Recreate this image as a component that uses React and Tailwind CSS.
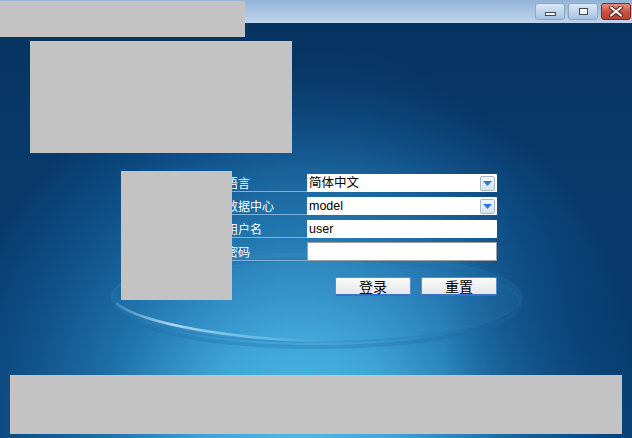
import React from "react";

const cjk = "font-['Noto_Sans_CJK_SC','Noto_Sans',sans-serif]";

function Background() {
  return (
    <svg className="absolute inset-0" width="632" height="415" viewBox="0 0 632 415">
      <defs>
        <radialGradient id="bg" cx="300" cy="400" r="360" gradientUnits="userSpaceOnUse">
          <stop offset="0" stopColor="#4cbbe8" />
          <stop offset="0.25" stopColor="#3fa6da" />
          <stop offset="0.55" stopColor="#1d6fa8" />
          <stop offset="0.8" stopColor="#0f4e86" />
          <stop offset="1" stopColor="#083a6a" />
        </radialGradient>
        <radialGradient id="dark" cx="600" cy="300" r="160" gradientUnits="userSpaceOnUse">
          <stop offset="0" stopColor="#07386a" stopOpacity="0.55" />
          <stop offset="1" stopColor="#07386a" stopOpacity="0" />
        </radialGradient>
        <radialGradient id="glow" cx="320" cy="220" r="200" gradientUnits="userSpaceOnUse">
          <stop offset="0" stopColor="#3a90c8" stopOpacity="0.2" />
          <stop offset="1" stopColor="#3a90c8" stopOpacity="0" />
        </radialGradient>
        <linearGradient id="arc" x1="110" y1="0" x2="360" y2="0" gradientUnits="userSpaceOnUse">
          <stop offset="0" stopColor="#bfe6fa" stopOpacity="0.15" />
          <stop offset="0.25" stopColor="#d8f2ff" stopOpacity="0.75" />
          <stop offset="0.6" stopColor="#a8dcf6" stopOpacity="0.4" />
          <stop offset="1" stopColor="#6ab4e0" stopOpacity="0" />
        </linearGradient>
        <linearGradient id="ring" x1="110" y1="0" x2="525" y2="0" gradientUnits="userSpaceOnUse">
          <stop offset="0" stopColor="#2a78b0" stopOpacity="0.5" />
          <stop offset="0.6" stopColor="#2a78b0" stopOpacity="0.35" />
          <stop offset="1" stopColor="#2a78b0" stopOpacity="0.15" />
        </linearGradient>
        <linearGradient id="top" x1="0" y1="0" x2="0" y2="415" gradientUnits="userSpaceOnUse">
          <stop offset="0" stopColor="#052f5a" stopOpacity="0.6" />
          <stop offset="0.35" stopColor="#052f5a" stopOpacity="0" />
        </linearGradient>
      </defs>
      <rect width="632" height="415" fill="url(#bg)" />
      <rect width="632" height="415" fill="url(#glow)" />
      <rect width="632" height="415" fill="url(#dark)" />
      <rect width="632" height="415" fill="url(#top)" />
      <ellipse cx="317" cy="274" rx="205" ry="45" fill="#5ab4e4" fillOpacity="0.08" stroke="url(#ring)" strokeWidth="2" />
      <ellipse cx="317" cy="280" rx="203" ry="44" fill="none" stroke="#1f6aa3" strokeOpacity="0.3" strokeWidth="4" />
      <path d="M116 280 C 140 300, 230 318, 360 320" fill="none" stroke="url(#arc)" strokeWidth="2.5" />
    </svg>
  );
}

function WinBtn({ children, red }) {
  return (
    <div
      className={
        "w-[30px] h-[17px] rounded-[3px] border flex items-center justify-center " +
        (red
          ? "border-[#7a2a20] bg-gradient-to-b from-[#e8907e] via-[#cc5340] to-[#b8402e]"
          : "border-[#8aa6c8] bg-gradient-to-b from-[#dbe7f4] via-[#c2d5eb] to-[#a9c2df]")
      }
    >
      {children}
    </div>
  );
}

function Dropdown({ value }) {
  return (
    <div className="w-[190px] h-[18px] bg-white flex items-center justify-between pl-[2px] pr-[2px]">
      <span className="text-[12.5px] leading-none text-black font-['Liberation_Sans','Noto_Sans_CJK_SC',sans-serif]">{value}</span>
      <div className="w-[15px] h-[15px] border border-[#a9b8c8] rounded-[2px] bg-gradient-to-b from-[#f4f7fa] to-[#d6e2ee] flex items-center justify-center">
        <svg width="9" height="5" viewBox="0 0 9 5">
          <path d="M0 0 H9 L4.5 5 Z" fill="#2f79dc" />
        </svg>
      </div>
    </div>
  );
}

function Row({ label, children }) {
  return (
    <div className="flex items-end h-[18px]">
      <div className={"w-[85px] h-[19px] border-b border-[#7eb2dc] flex items-end pl-[4px] text-white text-[12px] leading-[14px] pb-[1px] " + cjk}>
        {label}
      </div>
      {children}
    </div>
  );
}

function Btn({ children }) {
  return (
    <button className={"w-[76px] h-[19px] border border-[#5b8bd0] border-b-2 border-b-[#3f6fc0] rounded-[2px] bg-gradient-to-b from-[#fafafa] to-[#e6e6e6] text-black text-[14px] leading-none flex items-center justify-center " + cjk}>
      {children}
    </button>
  );
}

export default function App() {
  return (
    <div className="relative w-[632px] h-[438px] overflow-hidden flex flex-col bg-[#0a3c6c]">
      <div className="h-[23px] bg-gradient-to-b from-[#93b3d6] to-[#bfd5ec] flex justify-end items-start pt-[3px] pr-[1px] gap-[3px]">
        <WinBtn>
          <div className="w-[11px] h-[4px] bg-white border border-[#3a4a60] mt-[5px]" />
        </WinBtn>
        <WinBtn>
          <div className="w-[9px] h-[7px] border-[1.5px] border-[#3a4a60] bg-white" />
        </WinBtn>
        <WinBtn red>
          <svg width="14" height="11" viewBox="0 0 14 11">
            <path d="M2 1.5 L12 9.5 M12 1.5 L2 9.5" stroke="#4a1810" strokeWidth="4" strokeLinecap="round" />
            <path d="M2 1.5 L12 9.5 M12 1.5 L2 9.5" stroke="#ffffff" strokeWidth="2.2" strokeLinecap="round" />
          </svg>
        </WinBtn>
      </div>

      <div className="relative flex-1">
        <Background />
        <div className="relative flex flex-col w-[275px] ml-[222px] mt-[151px]">
          <div className="flex flex-col gap-[5px]">
            <Row label="语言">
              <Dropdown value="简体中文" />
            </Row>
            <Row label="数据中心">
              <Dropdown value="model" />
            </Row>
            <Row label="用户名">
              <div className="w-[190px] h-[18px] bg-white flex items-center pl-[2px]">
                <span className="text-[12.5px] leading-none text-black font-['Liberation_Sans',sans-serif]">user</span>
              </div>
            </Row>
            <Row label="密码">
              <div className="w-[190px] h-[19px] bg-white border border-[#a0a0a0]" />
            </Row>
          </div>
          <div className="flex justify-end gap-[10px] mt-[16px]">
            <Btn>登录</Btn>
            <Btn>重置</Btn>
          </div>
        </div>
      </div>

      <div className="absolute left-0 top-[1px] w-[245px] h-[36px] bg-[#c3c3c3]" />
      <div className="absolute left-[30px] top-[41px] w-[262px] h-[112px] bg-[#c3c3c3]" />
      <div className="absolute left-[121px] top-[171px] w-[111px] h-[129px] bg-[#c3c3c3]" />
      <div className="absolute left-[10px] top-[375px] w-[612px] h-[59px] bg-[#c3c3c3]" />
    </div>
  );
}
